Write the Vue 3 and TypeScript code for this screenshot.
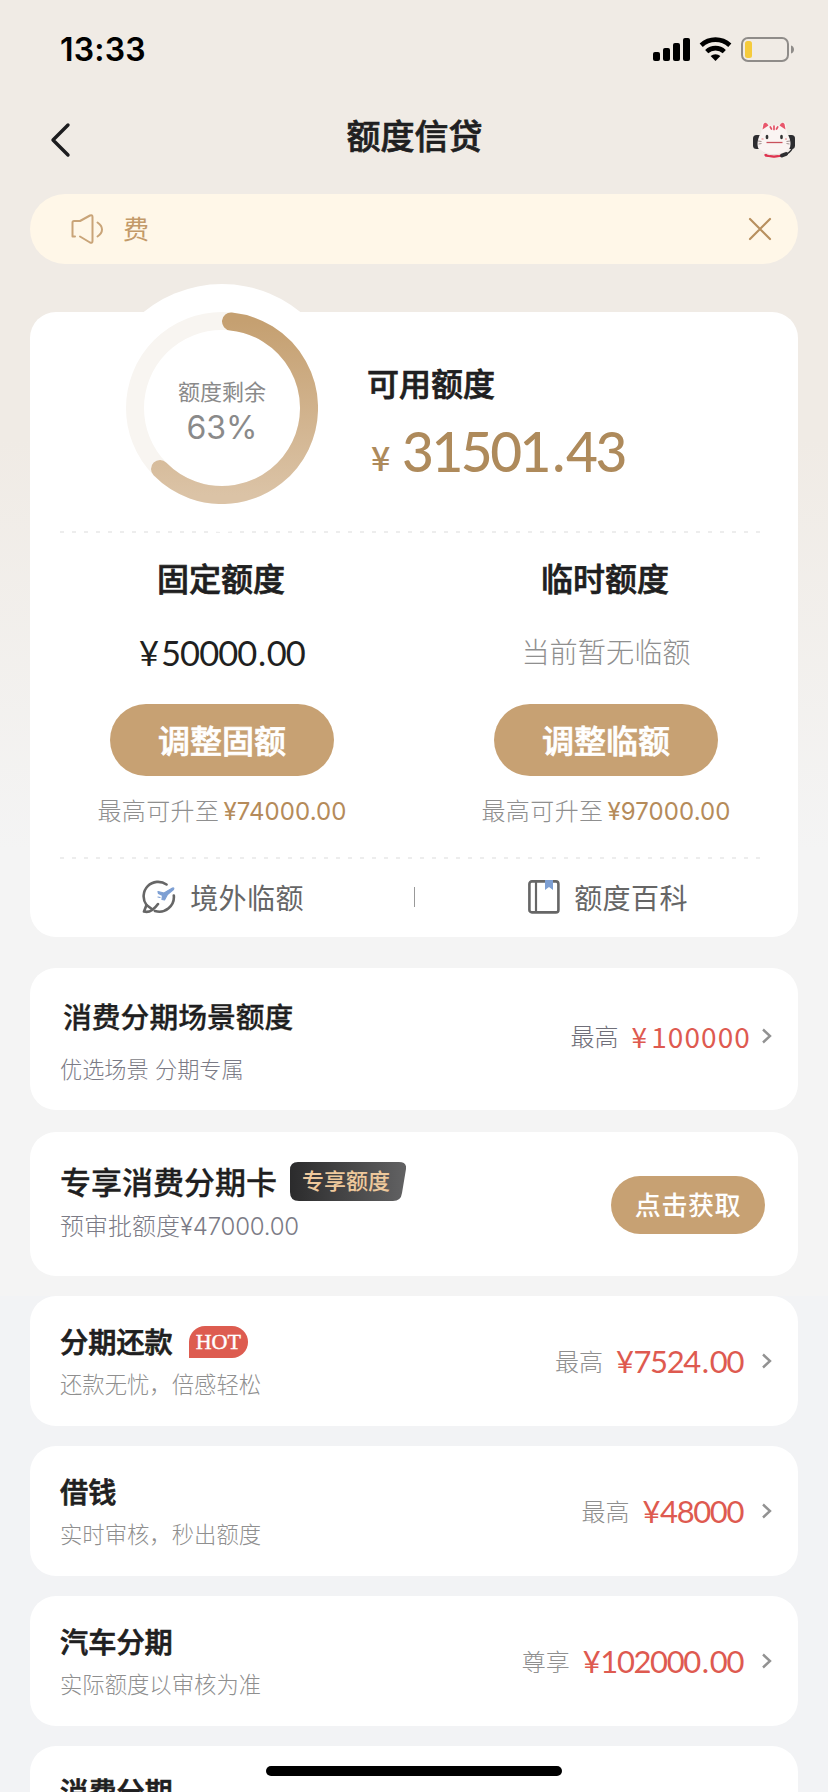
<script setup lang="ts">
interface Offer {
  title: string
  note: string
  label?: string
  whole?: string
  cents?: string
  hot?: boolean
}

interface Quota {
  title: string
  amount?: string
  cents?: string
  empty?: string
  action: string
  max: string
}

const quotas: Quota[] = [
  { title: '固定额度', amount: '50000', cents: '00', action: '调整固额', max: '¥74000.00' },
  { title: '临时额度', empty: '当前暂无临额', action: '调整临额', max: '¥97000.00' },
]

const offers: Offer[] = [
  { title: '分期还款', note: '还款无忧，倍感轻松', label: '最高', whole: '7524', cents: '00', hot: true },
  { title: '借钱', note: '实时审核，秒出额度', label: '最高', whole: '48000' },
  { title: '汽车分期', note: '实际额度以审核为准', label: '尊享', whole: '102000', cents: '00' },
  { title: '消费分期', note: '' },
]
</script>

<template>
  <div class="screen">
    <div class="status">
      <span class="time">13:33</span>
      <svg class="signals" width="144" height="28" viewBox="0 0 144 28">
        <rect x="1" y="15" width="7" height="9" rx="2" />
        <rect x="11" y="11" width="7" height="13" rx="2" />
        <rect x="21" y="6" width="7" height="18" rx="2" />
        <rect x="31" y="1" width="7" height="23" rx="2" />
        <g fill="none" stroke="#000" stroke-width="4.6">
          <path d="M49.2 8.2a21 21 0 0 1 28.6 0" />
          <path d="M54.7 14.6a13 13 0 0 1 17.600 0" />
        </g>
        <path d="M63.500 24l-4.900-4.900a7.400 7.400 0 0 1 9.800 0z" />
        <rect x="90" y="1" width="46" height="23" rx="6" fill="none" stroke="#8f8c89" stroke-width="2" />
        <rect x="93" y="4" width="7" height="17" rx="2.500" fill="#f5cb3c" />
        <path d="M139 8.500c4 1 4 7 0 8z" fill="#8f8c89" />
      </svg>
    </div>

    <header class="nav">
      <svg class="back" width="24" height="36" viewBox="0 0 24 36">
        <path d="M19 3L4 18l15 15" fill="none" stroke="#1d1d1f" stroke-width="3.400" stroke-linecap="round" stroke-linejoin="round" />
      </svg>
      <h1>额度信贷</h1>
      <svg class="cat" width="44" height="38" viewBox="0 0 44 38">
        <rect x="1" y="14" width="9" height="14" rx="3.500" fill="#2d2d30" />
        <rect x="34" y="14" width="9" height="14" rx="3.500" fill="#2d2d30" />
        <path d="M13 33q9 4 18 0v2q-9 2.500-18 0z" fill="#df3350" stroke="#df3350" />
        <path d="M9 14L10 4q.5-3.500 4-2l5 3h6l5-3q3.500-1.500 4 2l1 10z" fill="#faf4f2" />
        <path d="M10.500 8.500L11.500 3q2.500-3 5 1.500zM33.500 8.500L32.500 3q-2.500-3-5 1.500z" fill="#e8566b" />
        <path d="M22 4.500C32 4.500 38.500 15 38.500 23 38.500 31 31 34 22 34S5.500 31 5.500 23C5.500 15 12 4.500 22 4.500z" fill="#faf4f2" />
        <path d="M6.500 26.500c3 5 9 6.500 15.500 6.500s12.500-1.500 15.500-6.500C35 32 29 34 22 34s-13-2-15.500-7.500z" fill="#e6dad6" />
        <path d="M22 5v3.500M18.300 6l1.200 2M25.700 6l-1.200 2" stroke="#e25265" stroke-width="1.700" stroke-linecap="round" />
        <ellipse cx="15" cy="16" rx="1.400" ry="2.300" fill="#333" />
        <ellipse cx="29.500" cy="16" rx="1.400" ry="2.300" fill="#333" />
        <path d="M14.500 21.500h16" stroke="#c9525c" stroke-width="1.300" />
        <path d="M6 20l3.500.5M6.500 23l3-.5M38 20l-3.500.5M37.500 23l-3-.5" stroke="#877" stroke-width=".8" />
        <path d="M9.500 18h2M33 18h2" stroke="#f3a9ad" stroke-width="1.500" />
        <path d="M40.500 27c-2 4-5 6-8 7" fill="none" stroke="#2d2d30" stroke-width="1.500" />
        <path d="M30 34.500l4-1.500" stroke="#2d2d30" stroke-width="4" stroke-linecap="round" />
      </svg>
    </header>

    <div class="notice">
      <svg width="34" height="32" viewBox="0 0 34 32" fill="none" stroke="#c9a478" stroke-width="2" stroke-linecap="round" stroke-linejoin="round">
        <path d="M6 23.500H3.500V9.500c0-1 .5-1.500 1.500-1.500h6L21 2.500q2.500-1 2.500 1.500v24q0 2.500-2.500 1.500L11 23.500" />
        <path d="M28.500 9.500c6 4 6 10 0 14" />
      </svg>
      <span>费</span>
      <svg class="close" width="24" height="24" viewBox="0 0 24 24">
        <path d="M2 2l20 20M22 2L2 22" stroke="#b8905f" stroke-width="2.200" stroke-linecap="round" />
      </svg>
    </div>

    <main>
      <section class="card summary">
        <div class="overview">
          <div class="halo">
            <svg width="192" height="192" viewBox="0 0 192 192">
              <defs>
                <linearGradient id="arc" x1="0" y1="0" x2="0" y2="1">
                  <stop offset="0" stop-color="#c5a071" />
                  <stop offset="1" stop-color="#dbc3a6" />
                </linearGradient>
              </defs>
              <circle cx="96" cy="96" r="87" fill="none" stroke="#f8f5f1" stroke-width="18" />
              <path d="M105 9.470A87 87 0 1 1 34 157" fill="none" stroke="url(#arc)" stroke-width="18" stroke-linecap="round" />
            </svg>
            <div class="remain">
              <span>额度剩余</span>
              <b>63%</b>
            </div>
          </div>
          <div class="available">
            <h2>可用额度</h2>
            <p><i>¥</i><span class="geo">31501<em>.</em>43</span></p>
          </div>
        </div>

        <div class="dots"></div>

        <div class="quotas">
          <div v-for="q in quotas" :key="q.title" class="quota">
            <h2>{{ q.title }}</h2>
            <p v-if="q.amount" class="fixed geo"><i>¥</i>{{ q.amount }}<em>.</em>{{ q.cents }}</p>
            <p v-else class="none">{{ q.empty }}</p>
            <button>{{ q.action }}</button>
            <p class="max">最高可升至<span>{{ q.max }}</span></p>
          </div>
        </div>

        <div class="dots"></div>

        <div class="links">
          <a>
            <svg width="34" height="34" viewBox="0 0 34 34" fill="none" stroke="#666" stroke-width="2.600" stroke-linecap="round" stroke-linejoin="round">
              <path d="M24.500 4.500A14.500 14.500 0 0 0 4.500 25L2 31.500c5 1.500 10-2 14-7.500" />
              <path d="M4.500 25l6 4.500M31.800 15.500A14.600 14.600 0 0 1 13 31" />
              <path d="M16 11.500l6 1.500 8.500-5q2-.5 1 1.500l-6 5-3 5.500-2.500-.5.500-4-4-2zM16 17l2 .5" fill="#7d9fd3" stroke="#7d9fd3" stroke-width="1.200" />
            </svg>
            境外临额
          </a>
          <span class="bar"></span>
          <a>
            <svg width="32" height="34" viewBox="0 0 32 34">
              <rect x="1.400" y="1.400" width="29" height="31" rx="2.500" fill="none" stroke="#666" stroke-width="2.600" />
              <path d="M8 2v30" stroke="#666" stroke-width="2.200" />
              <path d="M17 0h8v10l-4-3-4 3z" fill="#7d9fd3" />
            </svg>
            额度百科
          </a>
        </div>
      </section>

      <section class="card scene">
        <div>
          <h3>消费分期场景额度</h3>
          <p>优选场景 分期专属</p>
        </div>
        <div class="price">
          <span class="label">最高</span>
          <span class="sans"><i>¥</i>100000</span>
          <svg class="arrow" width="12" height="16" viewBox="0 0 12 16"><path d="M2 1.500l7 6.500-7 6.500" /></svg>
        </div>
      </section>

      <section class="card exclusive">
        <div>
          <div class="heading">
            <h3>专享消费分期卡</h3>
            <div class="tag">
              <svg width="116" height="39" viewBox="0 0 116 39">
                <defs>
                  <linearGradient id="tag" x1="0" y1="0" x2="1" y2="0">
                    <stop offset="0" stop-color="#2b2b2c" />
                    <stop offset="1" stop-color="#626263" />
                  </linearGradient>
                </defs>
                <path d="M8 0H109q8 0 7 7l-4 24q-1 8-9 8H9q-9 0-9-9V8q0-8 8-8z" fill="url(#tag)" />
              </svg>
              <span>专享额度</span>
            </div>
          </div>
          <p>预审批额度<span>¥47000.00</span></p>
        </div>
        <button>点击获取</button>
      </section>

      <div class="offers">
        <section v-for="o in offers" :key="o.title" class="card offer">
          <div>
            <div class="heading">
              <h3>{{ o.title }}</h3>
              <span v-if="o.hot" class="hot">HOT</span>
            </div>
            <p>{{ o.note }}</p>
          </div>
          <div v-if="o.whole" class="price">
            <span class="label">{{ o.label }}</span>
            <span class="geo"><i>¥</i>{{ o.whole }}<template v-if="o.cents"><em>.</em>{{ o.cents }}</template></span>
            <svg class="arrow" width="12" height="16" viewBox="0 0 12 16"><path d="M2 1.500l7 6.500-7 6.500" /></svg>
          </div>
        </section>
      </div>
    </main>

    <div class="home"></div>
  </div>
</template>

<style>
body {
  margin: 0;
  overflow: hidden;
}
</style>

<style scoped>
.screen {
  position: relative;
  width: 828px;
  height: 1792px;
  overflow: hidden;
  box-sizing: border-box;
  background: linear-gradient(#f0ebe5 0, #f0ebe5 440px, #f4f4f4 850px, #f4f4f4 1296px, #f2f3f5 1296px);
  color: #1f1f21;
  font-family: Inter, "Noto Sans CJK SC", sans-serif;
}
h1, h2, h3, p { margin: 0; }
h1, h2, .offer h3 { -webkit-text-stroke: .7px currentColor; }
.scene h3, .exclusive h3 { -webkit-text-stroke: .3px currentColor; }
i, em { font-style: normal; }
svg { flex: none; display: block; }
button {
  border: 0;
  padding: 0;
  background: #c7a173;
  color: #fff;
  font-family: "Noto Sans CJK SC", sans-serif;
}
.geo { font-family: Lato, sans-serif; }
.geo em { display: inline-block; text-align: center; }

.status {
  height: 98px;
  display: flex;
  justify-content: space-between;
  padding: 0 32px 0 60px;
}
.time {
  padding-top: 30px;
  line-height: 40px;
  font-size: 32px;
  font-weight: 600;
  letter-spacing: .2px;
  color: #000;
}
.signals { margin-top: 37px; }

.nav {
  height: 96px;
  display: flex;
  align-items: center;
  justify-content: space-between;
  padding: 0 32px 0 49px;
  box-sizing: border-box;
}
.nav h1 { font-size: 34px; font-weight: 500; line-height: 48px; margin: -18px 0 0 4px; }
.back { margin-top: -12px; }
.cat { margin-top: -12px; }

.notice {
  height: 70px;
  margin: 0 30px;
  padding: 0 26px 0 39px;
  border-radius: 35px;
  background: #fff7e8;
  display: flex;
  align-items: center;
  color: #c39a69;
  font-size: 26px;
}
.notice span { margin: -3px auto 0 20px; }

main { padding: 48px 30px 0; }
.card { background: #fff; border-radius: 26px; box-sizing: border-box; }

.summary { height: 625px; }
.overview { height: 219px; display: flex; }
.halo {
  position: relative;
  width: 248px;
  height: 248px;
  margin: -28px 0 0 68px;
  border-radius: 50%;
  background: #fff;
  display: flex;
  align-items: center;
  justify-content: center;
}
.remain {
  position: absolute;
  inset: 93px 0 0;
  display: flex;
  flex-direction: column;
  align-items: center;
  color: #8a8a8a;
}
.remain span { font-size: 22px; line-height: 30px; }
.remain b { font-size: 32px; line-height: 42px; font-weight: 400; }
.available { padding: 49px 0 0 21px; position: relative; }
.available h2 { font-size: 32px; font-weight: 500; line-height: 48px; }
.available p { display: flex; align-items: baseline; line-height: 66px; margin-top: 9px; color: #ae8a5b; }
.available p i { font-family: "Noto Sans CJK SC"; width: 31px; margin-left: 4px; font-size: 34px; font-weight: 500; line-height: 40px; position: relative; top: -1px; }
.available .geo { font-size: 55px; font-weight: 500; letter-spacing: -2.500px; }
.available em { width: 17px; }

.dots {
  height: 2px;
  margin: 0 38px 0 30px;
  background: repeating-linear-gradient(90deg, #ededed 0 4px, transparent 4px 12px);
}
.quotas { display: grid; grid-template-columns: 1fr 1fr; height: 324px; }
.quota { display: flex; flex-direction: column; align-items: center; padding-top: 23px; }
.quota h2 { font-size: 32px; font-weight: 500; line-height: 48px; margin-left: -2px; }
.quota .fixed { font-size: 34.500px; line-height: 48px; margin-top: 25px; letter-spacing: -1px; }
.fixed i { margin-right: 3px; }
.fixed em { width: 10.700px; }
.quota .none { font-size: 28.200px; font-weight: 300; line-height: 48px; margin-top: 25px; color: #8f8f8f; }
.quota button {
  width: 224px;
  height: 72px;
  border-radius: 36px;
  margin-top: 27px;
  padding-bottom: 3px;
  font-size: 32px;
  font-weight: 500;
  -webkit-text-stroke: .7px currentColor;
}
.max { font-size: 24px; letter-spacing: .4px; line-height: 36px; margin-top: 18px; color: #8f8f8f; font-weight: 300; }
.max span { margin-left: 4px; color: #b58b5a; font-weight: 400; letter-spacing: .1px; }

.links { display: grid; grid-template-columns: 384px 2px 382px; align-items: center; height: 76px; }
.links a {
  display: flex;
  align-items: center;
  justify-content: center;
  gap: 14px;
  padding-left: 2px;
  color: #666;
  font-size: 28px;
  letter-spacing: .4px;
}
.bar { height: 20px; width: 1px; background: #999; }

.scene { height: 142px; margin-top: 31px; padding: 28px 25px 0 30px; display: flex; justify-content: space-between; }
.scene h3 { margin-left: 3px; font-size: 28.800px; font-weight: 500; line-height: 44px; }
.scene p { font-size: 22.200px; line-height: 32px; margin-top: 14px; color: #7b7b86; font-weight: 300; }
.price { display: flex; align-items: center; height: 40px; color: #de5a50; }
.scene .price { margin-top: 20px; }
.label { font-size: 24px; color: #7d7d87; position: relative; top: -1px; }
.scene .label { font-weight: 300; color: #6f6f79; }
.sans { font-family: "Noto Sans CJK SC", sans-serif; font-size: 28px; letter-spacing: 1.100px; margin-left: 13px; }
.sans i { margin-right: 3px; }
.arrow { fill: none; stroke: #929292; stroke-width: 2.400; margin-left: 10px; }

.exclusive { height: 144px; margin-top: 22px; padding: 27px 33px 0 30px; display: flex; justify-content: space-between; }
.heading { display: flex; align-items: center; }
.exclusive h3 { font-size: 31px; font-weight: 500; line-height: 44px; padding-top: 2px; }
.tag { position: relative; margin: -2px 0 0 13px; }
.tag span {
  position: absolute;
  inset: 0 0 0 12px;
  font-size: 22px;
  font-weight: 500;
  line-height: 39px;
  color: #efc99c;
}
.exclusive p { font-size: 24px; line-height: 36px; margin-top: 4px; color: #7b7b86; font-weight: 300; }
.exclusive p span { letter-spacing: -.2px; }
.exclusive button { width: 154px; height: 58px; border-radius: 29px; margin-top: 17px; padding-bottom: 4px; font-size: 26px; letter-spacing: .6px; font-weight: 500; }

.offers { display: flex; flex-direction: column; gap: 20px; margin-top: 20px; }
.offer { height: 130px; padding: 26px 25px 0 30px; display: flex; justify-content: space-between; }
.offer h3 { font-size: 28.200px; font-weight: 500; line-height: 42px; }
.hot {
  margin: -2px 0 0 16px;
  width: 59px;
  height: 32px;
  border-radius: 16px 16px 16px 0;
  background: #dd5c50;
  color: #fff;
  text-align: center;
  font: 22px/32px "Liberation Serif", serif;
  -webkit-text-stroke: .4px currentColor;
}
.offer p { font-size: 22.350px; line-height: 32px; margin-top: 5px; color: #8f8f8f; font-weight: 300; }
.offer .price { margin-top: 19px; }
.offer .label { color: #8f8f8f; font-weight: 300; }
.offer .geo { font-size: 31px; letter-spacing: -1.400px; margin-left: 13px; }
.offer .geo em { width: 10px; }
.offer .geo i { margin-right: 1px; }
.offer .arrow { margin-left: 18px; }

.home {
  position: absolute;
  left: 266px;
  bottom: 16px;
  width: 296px;
  height: 10px;
  border-radius: 5px;
  background: #000;
}
</style>
